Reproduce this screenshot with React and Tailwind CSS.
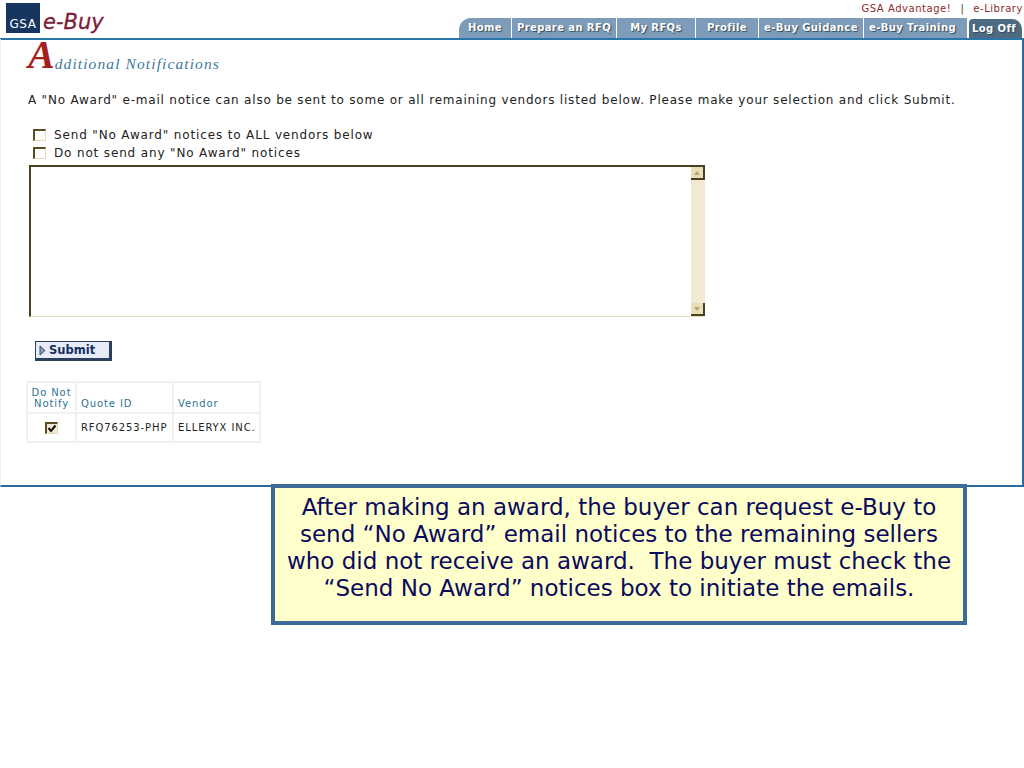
const V = "font-['DejaVu_Sans',Verdana,sans-serif]";

function Tab({ label, w, first, last, extra = "" }) {
  return (
    <div
      className={`flex items-center justify-center ${w} ${
        last ? "h-[19px] bg-[#4f6b82] rounded-tr-[10px] rounded-tl-[4px] pr-[3px]" : "h-[20px] bg-[#7c9cb9] pb-[2px]"
      } ${first ? "rounded-tl-[12px]" : ""} ${extra} text-[10px] font-bold tracking-[0.4px] text-white [text-shadow:1px_1px_1px_#33475a] whitespace-nowrap`}
    >
      {label}
    </div>
  );
}

function Check({ checked, className = "" }) {
  return (
    <span className={`flex items-center justify-center w-[13px] h-[12px] border-t-2 border-l-2 border-t-[#5a4c22] border-l-[#5a4c22] border-r border-b border-r-[#e4dcb8] border-b-[#e4dcb8] ${checked ? "bg-[#f0ead2]" : "bg-white"} ${className}`}>
      {checked && (
        <svg width="10" height="9" viewBox="0 0 10 9">
          <path d="M1.5 4 L4 7 L8.5 1.5" fill="none" stroke="#111" strokeWidth="2" />
        </svg>
      )}
    </span>
  );
}

function ScrollBtn({ up }) {
  return (
    <div className="flex items-center justify-center w-[14px] h-[13px] bg-[#e8dfb8] border-r-2 border-b-2 border-r-[#4a4020] border-b-[#4a4020]">
      <svg width="6" height="4" viewBox="0 0 6 4">
        <path d={up ? "M3 0 L6 4 L0 4 Z" : "M0 0 L6 0 L3 4 Z"} fill="#b7a868" />
      </svg>
    </div>
  );
}

export default function App() {
  return (
    <div className={`w-[1024px] h-[768px] bg-white overflow-hidden ${V}`}>
      <header className="flex h-[38px] justify-between">
        <div className="flex pl-[6px] pt-[3px] gap-[3px]">
          <div className="flex items-end justify-center w-[34px] h-[30px] bg-[#16355f] pb-[2px] text-[12px] leading-[14px] tracking-[0.6px] text-white">
            GSA
          </div>
          <div className="text-[21px] leading-[38px] italic text-[#7d1c3c] font-['DejaVu_Sans',sans-serif] [-webkit-text-stroke:0.3px_#7d1c3c]">e-Buy</div>
        </div>
        <div className="flex flex-col items-end pr-[1px]">
          <div className="flex items-center h-[18px] pb-[2px] text-[10px] tracking-[0.55px] text-[#8b2a2a] whitespace-nowrap">
            <span>GSA Advantage!</span>
            <span className="mx-[9px] text-[#444]">|</span>
            <span>e-Library</span>
          </div>
          <nav className="flex items-end gap-px pr-px">
            <Tab label="Home" w="w-[52px]" first />
            <Tab label="Prepare an RFQ" w="w-[104px]" />
            <Tab label="My RFQs" w="w-[78px]" />
            <Tab label="Profile" w="w-[62px]" />
            <Tab label="e-Buy Guidance" w="w-[104px]" />
            <Tab label="e-Buy Training" w="w-[103px]" extra="pr-[6px]" />
            <Tab label="Log Off" w="w-[53px] ml-px" last />
          </nav>
        </div>
      </header>

      <main className="h-[449px] border-t-2 border-t-[#2a76a8] border-b-2 border-b-[#2b6a9c] border-r-2 border-r-[#2b6a9c] border-l border-l-[#f1f1f1] pl-[27px] text-[12px] text-[#222]">
        <div className="flex items-end h-[33px]">
          <span className="font-['Liberation_Serif',serif] italic font-bold text-[40px] leading-[36px] text-[#a5201f]">A</span>
          <span className="font-['Liberation_Serif',serif] italic text-[15.5px] leading-[20px] tracking-[1.1px] text-[#3f7a9e] mb-[-1px]">dditional Notifications</span>
        </div>
        <p className="mt-[20px] h-[14px] leading-[14px] tracking-[0.79px] whitespace-nowrap">
          A "No Award" e-mail notice can also be sent to some or all remaining vendors listed below. Please make your selection and click Submit.
        </p>
        <div className="mt-[22px] flex flex-col gap-[6px] pl-[5px] tracking-[0.85px]">
          <label className="flex items-center gap-[8px] h-[12px]">
            <Check />
            <span>Send "No Award" notices to ALL vendors below</span>
          </label>
          <label className="flex items-center gap-[8px] h-[12px]">
            <Check />
            <span>Do not send any "No Award" notices</span>
          </label>
        </div>
        <div className="mt-[6px] ml-[1px] flex w-[676px] h-[152px] border-t-2 border-l-2 border-t-[#4a4020] border-l-[#4a4020] border-b border-b-[#e8dfb8]">
          <div className="flex-1 bg-white" />
          <div className="flex flex-col justify-between w-[14px] bg-[#f1ead3]">
            <ScrollBtn up />
            <ScrollBtn />
          </div>
        </div>
        <button className="mt-[24px] ml-[7px] flex items-center w-[77px] h-[20px] gap-[3px] pl-[3px] pt-px bg-[#e6ebf5] border border-[#2c3f5e] border-r-[3px] border-b-[3px] text-[11.5px] font-bold text-[#17305e]">
          <svg width="7" height="11" viewBox="0 0 7 11">
            <path d="M1 1 L6 5.5 L1 10 Z" fill="#8fa0bd" stroke="#33496e" strokeWidth="1" />
          </svg>
          Submit
        </button>
        <table className="mt-[20px] -ml-[2px] border-separate border-spacing-0 border-2 border-[#f0f0f0] text-[10px] tracking-[0.9px] leading-[11px]">
          <thead className="text-[#2f7396]">
            <tr className="h-[31px]">
              <th className="w-[47px] font-normal align-bottom pb-[3px] border-b-2 border-[#f0f0f0]">Do Not<br />Notify</th>
              <th className="w-[97px] font-normal text-left align-bottom pb-[3px] pl-[4px] border-b-2 border-l-2 border-[#f0f0f0]">Quote ID</th>
              <th className="w-[87px] font-normal text-left align-bottom pb-[3px] pl-[4px] border-b-2 border-l-2 border-[#f0f0f0]">Vendor</th>
            </tr>
          </thead>
          <tbody className="text-[#222]">
            <tr className="h-[27px]">
              <td><Check checked className="mx-auto" /></td>
              <td className="pl-[4px] border-l-2 border-[#f0f0f0] whitespace-nowrap">RFQ76253-PHP</td>
              <td className="pl-[4px] border-l-2 border-[#f0f0f0] whitespace-nowrap">ELLERYX INC.</td>
            </tr>
          </tbody>
        </table>
      </main>

      <aside className="relative mt-[-3px] ml-[271px] flex flex-col items-center justify-center w-[696px] h-[141px] border-[4px] border-[#3e6a9a] bg-[#ffffcc] pb-[13px] text-[23px] leading-[27px] text-[#0a0a5e] whitespace-nowrap">
        <span>After making an award, the buyer can request e-Buy to</span>
        <span>send “No Award” email notices to the remaining sellers</span>
        <span className="whitespace-pre">who did not receive an award.  The buyer must check the</span>
        <span>“Send No Award” notices box to initiate the emails.</span>
      </aside>
    </div>
  );
}
